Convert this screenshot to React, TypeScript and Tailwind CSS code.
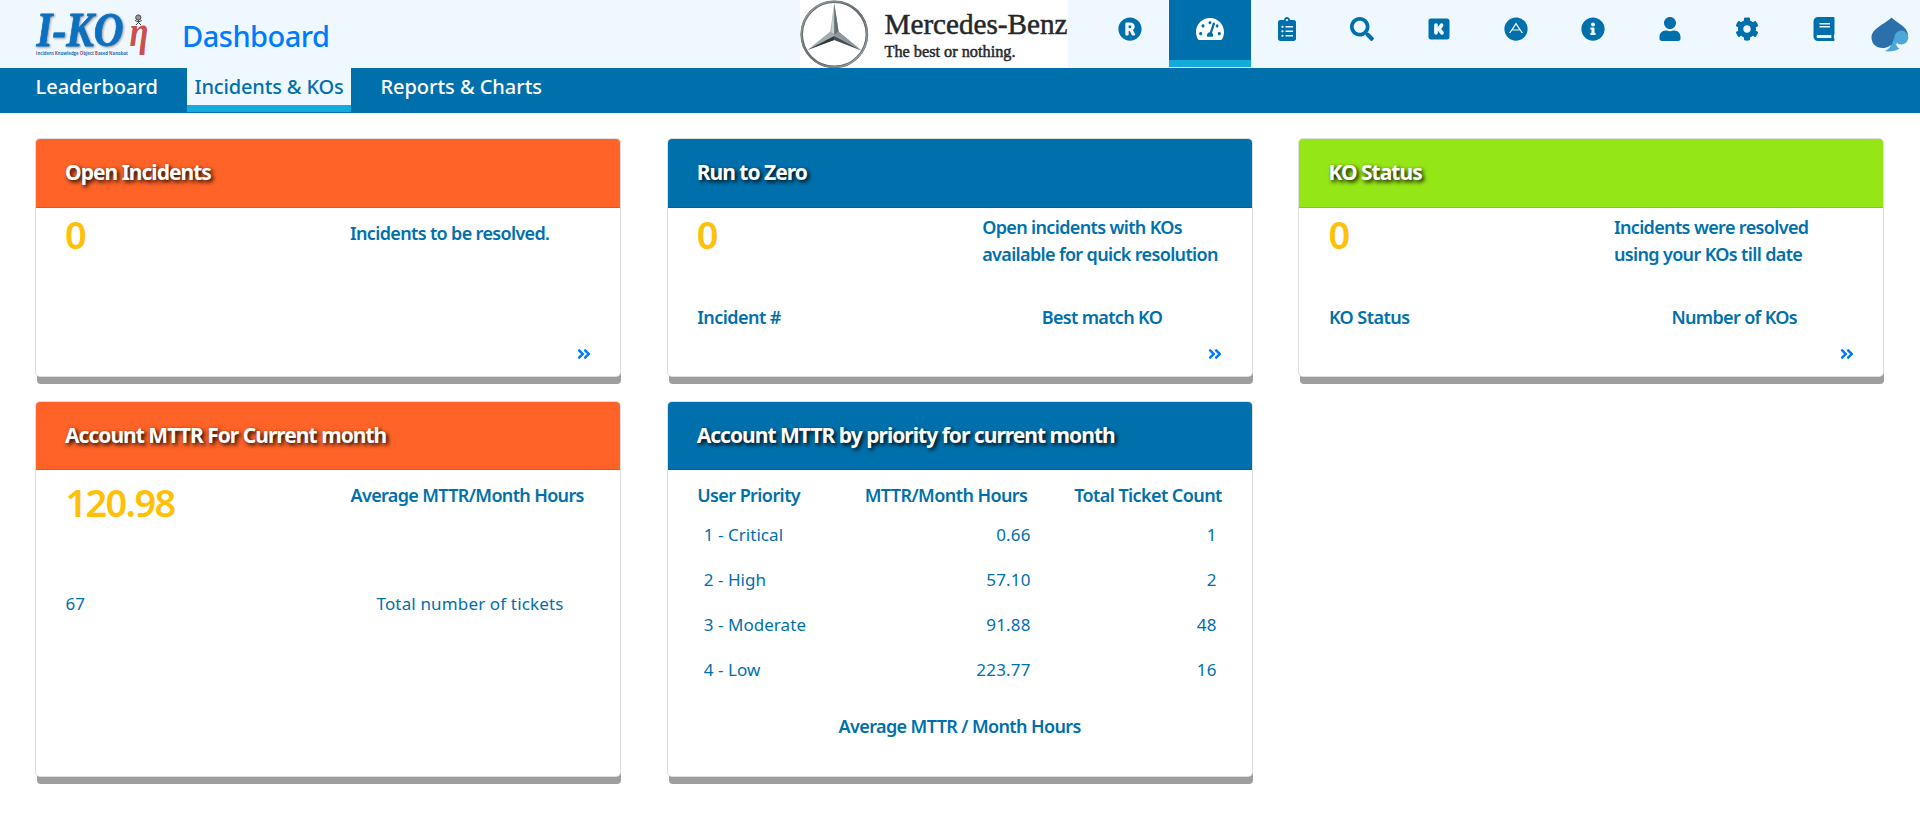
import type { ReactNode } from "react";
import type { IconType } from "react-icons";
import {
  FaRegistered,
  FaTachometerAlt,
  FaClipboardList,
  FaSearch,
  FaKickstarter,
  FaAdn,
  FaInfoCircle,
  FaUser,
  FaCog,
  FaBook,
  FaAngleDoubleRight,
} from "react-icons/fa";

const body = "text-[18px] leading-[27px] font-semibold whitespace-nowrap";
const light = "text-[17px] leading-[27px] font-normal whitespace-nowrap";

function IkonLogo() {
  return (
    <svg width="116" height="52" viewBox="34 8 116 52" className="block">
      <g fontFamily="Liberation Serif" fontWeight="bold" fontStyle="italic">
        <text
          x="36.500"
          y="45.500"
          fontSize="48"
          textLength="87"
          lengthAdjust="spacingAndGlyphs"
          fill="#0c70c0"
          stroke="#0c70c0"
          strokeWidth="0.8"
          className="drop-shadow-[1px_1.5px_1px_rgba(0,0,0,0.4)]"
        >
          I-KO
        </text>
        <text x="129.500" y="45.500" fontSize="45" textLength="19" lengthAdjust="spacingAndGlyphs" fill="#c9504e">
          η
        </text>
      </g>
      <text x="36" y="54.500" fontFamily="Open Sans" fontSize="5.600" fontWeight="bold" textLength="92" lengthAdjust="spacingAndGlyphs" fill="#1f74b5">
        <tspan fill="#d33c3c">I</tspan>ncident <tspan fill="#d33c3c">K</tspan>nowledge <tspan fill="#d33c3c">O</tspan>bject <tspan fill="#d33c3c">B</tspan>ased <tspan fill="#d33c3c">N</tspan>anobot
      </text>
      <g stroke="#444" strokeWidth="1" fill="none">
        <circle cx="138.300" cy="17.500" r="2.600" fill="#999" />
        <path d="M138.500 20v2.500M135 20.500l3.500 1.500 3.300-1.500M136 25l2.500-2.500 2.500 2.500" />
      </g>
    </svg>
  );
}

function MercedesLogo() {
  return (
    <svg width="268" height="68" viewBox="0 0 268 68" className="block bg-white">
      <defs>
        <linearGradient id="ring" x1="0" y1="0" x2="1" y2="1">
          <stop offset="0" stopColor="#a2a8aa" />
          <stop offset="0.5" stopColor="#6a7175" />
          <stop offset="1" stopColor="#a7adaf" />
        </linearGradient>
      </defs>
      <circle cx="34.300" cy="34.300" r="32.600" fill="none" stroke="#5b6367" strokeWidth="2.600" />
      <circle cx="34.300" cy="34.300" r="32.800" fill="none" stroke="url(#ring)" strokeWidth="1.500" />
      <path d="M34.300 3L30.300 31.500 7.500 50 34.300 40 61.500 50.500 38.500 31.500z" fill="#a4abaf" />
      <path d="M34.300 3v32L38.600 31.500z" fill="#656e73" />
      <path d="M34.300 36L7.500 50 34.300 40z" fill="#32393d" />
      <path d="M34.300 36L61.500 50.500 34.300 40z" fill="#454d51" />
      <path d="M34.300 35L38.500 31.500 61.500 50.500z" fill="#8e979b" />
      <path d="M33.400 6L31.300 32 34 34z" fill="#ccd1d3" />
      <g fontFamily="Liberation Serif" fill="#25282b" stroke="#25282b" strokeWidth="0.5">
        <text x="84.500" y="34" fontSize="30" textLength="183" lengthAdjust="spacingAndGlyphs">Mercedes-Benz</text>
        <text x="84.500" y="57" fontSize="17" textLength="131" lengthAdjust="spacingAndGlyphs">The best or nothing.</text>
      </g>
    </svg>
  );
}

function SpadeLogo() {
  return (
    <svg width="38" height="36" viewBox="0 0 38 36" className="block">
      <path d="M20.500 25.500C20 30 17.500 32.500 13.500 34 18.500 35 25 34 28.500 31.500 26.500 30.500 25.500 29 25 27z" fill="#4ba6d9" />
      <path
        d="M20.500 0.500C16 6 0.500 11 0.500 20.500 0.500 26.500 5 31 11.500 31 17 31 20 28.500 23 25L37 19C37.500 10 26 6 20.500 0.500z"
        fill="#2b70ab"
      />
      <circle cx="30.300" cy="20.600" r="7" fill="#4ba6d9" />
      <path d="M23.400 20.500L21 26.500 26 27z" fill="#4ba6d9" />
    </svg>
  );
}

const nav: { icon: IconType; cell: string; size: number; active?: boolean; label: string }[] = [
  { icon: FaRegistered, cell: "w-[77px] pr-px", size: 24, label: "Register" },
  { icon: FaTachometerAlt, cell: "w-[82px]", size: 28, active: true, label: "Dashboard" },
  { icon: FaClipboardList, cell: "w-[72px]", size: 24, label: "Lists" },
  { icon: FaSearch, cell: "w-[78px]", size: 24, label: "Search" },
  { icon: FaKickstarter, cell: "w-[76px]", size: 24, label: "Knowledge" },
  { icon: FaAdn, cell: "w-[77px]", size: 24, label: "Automation" },
  { icon: FaInfoCircle, cell: "w-[78px]", size: 24, label: "Info" },
  { icon: FaUser, cell: "w-[77px] pr-px", size: 24, label: "User" },
  { icon: FaCog, cell: "w-[76px]", size: 24, label: "Settings" },
  { icon: FaBook, cell: "w-[78px]", size: 24, label: "Guide" },
];

function Header() {
  return (
    <header className="flex h-[68px] bg-[#f0f8ff] text-[#0070ad]">
      <div className="w-[34px]" />
      <div className="w-[148px] pt-2">
        <IkonLogo />
      </div>
      <h1 className="w-[618px] text-[29px] leading-[72px] font-medium tracking-[-0.5px] text-[#007bff]">Dashboard</h1>
      <MercedesLogo />
      <nav className="ml-[24px] flex">
        {nav.map(({ icon: Icon, cell, size, active, label }) => (
          <a
            key={label}
            aria-label={label}
            className={`${cell} flex h-[67px] items-center justify-center ${
              active ? "border-b-[7px] border-[#12abdb] bg-[#0070ad] pb-[2px] text-white" : "pb-[9px]"
            }`}
          >
            <Icon size={size} />
          </a>
        ))}
      </nav>
      <div className="pt-[17px] pl-[8px]">
        <SpadeLogo />
      </div>
    </header>
  );
}

function Tabs() {
  return (
    <div className="flex h-[45px] bg-[#0070ad] text-[20px] leading-[37px] font-medium whitespace-nowrap text-white">
      <a className="w-[187px] pl-[35.500px]">Leaderboard</a>
      <a className="h-[44px] w-[164px] border-b-[7px] border-[#12abdb] bg-[#f0f8ff] pl-[7.500px] tracking-[-0.15px] text-[#0070ad]">
        Incidents &amp; KOs
      </a>
      <a className="pl-[29.500px] tracking-[-0.05px]">Reports &amp; Charts</a>
    </div>
  );
}

function Card({ title, color, height, head, children }: { title: string; color: string; height: string; head: string; children: ReactNode }) {
  return (
    <section
      className={`${height} w-[586px] rounded-[5px] border border-black/[0.125] bg-white shadow-[1px_8px_0_-1px_#9e9e9e]`}
    >
      <h2
        className={`${head} ${color} rounded-t-[4px] border-b border-black/[0.125] pl-[29px] text-[21px] font-bold whitespace-nowrap text-white [text-shadow:2px_2px_4px_#000]`}
      >
        {title}
      </h2>
      {children}
    </section>
  );
}

const row1 = "h-[239px]";
const row1Head = "h-[69px] leading-[67px] tracking-[-0.98px]";
const row2 = "h-[376px]";
const row2Head = "h-[68px] leading-[67px] tracking-[-0.98px]";
const orange = "bg-[#ff6327]";
const blue = "bg-[#0070ad]";
const green = "bg-[#95e616]";

function Chevron() {
  return (
    <div className="mt-[15px] flex justify-end pr-[28.500px] text-[#007bff]">
      <FaAngleDoubleRight size={16} />
    </div>
  );
}

function Summary({ note, lines, left, right, rightPad }: { note: string; lines: string[]; left: string; right: string; rightPad: string }) {
  return (
    <>
      <div className="flex h-[96px] pl-[29px]">
        <div className="w-[285px] text-[38px] leading-[53px] font-semibold tracking-[-1px] text-[#ffc107]">0</div>
        <div className={`${body} ${note}`}>
          {lines.map((l) => (
            <div key={l}>{l}</div>
          ))}
        </div>
      </div>
      <div className={`${body} flex h-[27px] pl-[29.500px] tracking-[-0.55px]`}>
        <div className={rightPad}>{left}</div>
        <div className="tracking-[-0.65px]">{right}</div>
      </div>
      <Chevron />
    </>
  );
}

const priorities = [
  ["1 - Critical", "0.66", "1"],
  ["2 - High", "57.10", "2"],
  ["3 - Moderate", "91.88", "48"],
  ["4 - Low", "223.77", "16"],
];

export default function App() {
  return (
    <div className="min-h-[825px] bg-white font-['Noto_Sans',sans-serif] text-[#0070ad]">
      <Header />
      <Tabs />
      <main className="grid grid-cols-[586px_586px_586px] gap-x-[45.700px] gap-y-[24px] pt-[25px] pl-[35px]">
        <Card title="Open Incidents" color={orange} height={row1} head={row1Head}>
          <Summary note="pt-[12px] tracking-[-0.65px]" lines={["Incidents to be resolved."]} left="" right="" rightPad="w-[344px]" />
        </Card>
        <Card title="Run to Zero" color={blue} height={row1} head={row1Head}>
          <Summary
            note="pt-[6px] pl-[0.500px] tracking-[-0.65px]"
            lines={["Open incidents with KOs", "available for quick resolution"]}
            left="Incident #"
            right="Best match KO"
            rightPad="w-[344.500px]"
          />
        </Card>
        <Card title="KO Status" color={green} height={row1} head={row1Head}>
          <Summary
            note="pt-[6px] pl-[0.500px] tracking-[-0.64px]"
            lines={["Incidents were resolved", "using your KOs till date"]}
            left="KO Status"
            right="Number of KOs"
            rightPad="w-[342.500px]"
          />
        </Card>
        <Card title="Account MTTR For Current month" color={orange} height={row2} head={row2Head}>
          <div className="flex h-[120px] pl-[29.500px]">
            <div className="w-[285px] text-[38px] leading-[65px] font-semibold tracking-[-1.7px] text-[#ffc107]">120.98</div>
            <div className={`${body} pt-[12px] tracking-[-0.65px]`}>Average MTTR/Month Hours</div>
          </div>
          <div className={`${light} flex pl-[29.500px] tracking-[0.15px]`}>
            <div className="w-[311px]">67</div>
            <div>Total number of tickets</div>
          </div>
        </Card>
        <Card title="Account MTTR by priority for current month" color={blue} height={row2} head={row2Head}>
          <div className={`${body} flex pt-[12px] pl-[29.500px] tracking-[-0.58px]`}>
            <div className="w-[167.500px]">User Priority</div>
            <div className="w-[209.500px]">MTTR/Month Hours</div>
            <div>Total Ticket Count</div>
          </div>
          <div className="pt-[3px] pl-[36px]">
            {priorities.map(([name, hours, count]) => (
              <div key={name} className="grid h-[45px] grid-cols-[128px_199px_186px] text-[17px] leading-[45px] font-normal tracking-[0.05px]">
                <div>{name}</div>
                <div className="text-right tracking-[0.2px]">{hours}</div>
                <div className="text-right tracking-[0.2px]">{count}</div>
              </div>
            ))}
          </div>
          <div className={`${body} pt-[21px] text-center tracking-[-0.62px]`}>Average MTTR / Month Hours</div>
        </Card>
      </main>
    </div>
  );
}
